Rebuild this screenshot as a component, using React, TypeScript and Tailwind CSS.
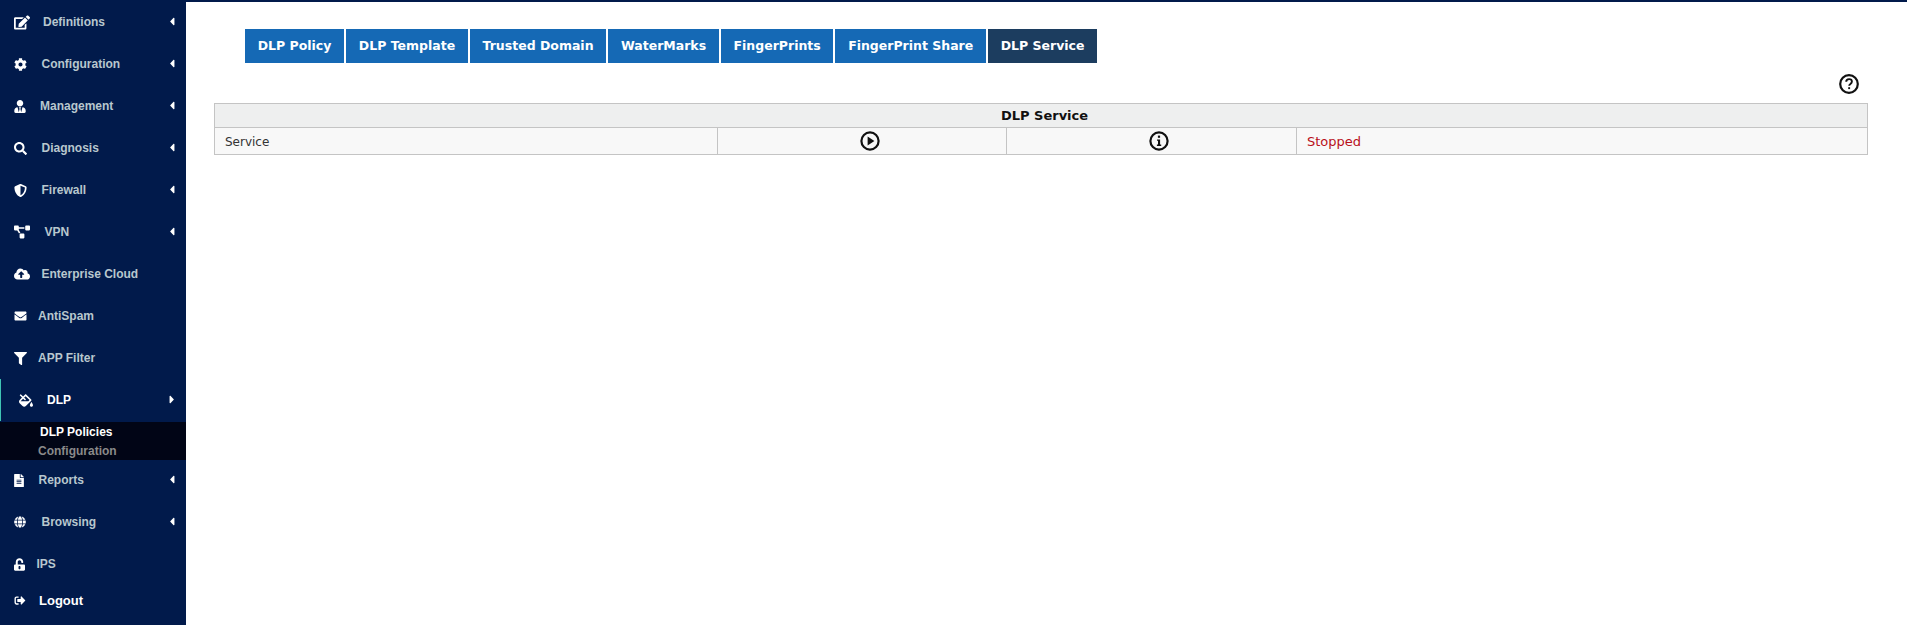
import {
  FaEdit, FaCog, FaUserTie, FaSearch, FaShieldAlt, FaProjectDiagram, FaCloudUploadAlt,
  FaEnvelope, FaFilter, FaFillDrip, FaFileAlt, FaGlobe, FaUnlockAlt, FaSignOutAlt,
  FaCaretLeft, FaCaretRight,
} from 'react-icons/fa'
import { ComponentType } from 'react'

type NavItem = {
  label: string
  icon: ComponentType<{ className?: string }>
  iconClass: string
  textClass: string
  arrow?: boolean
}

const topItems: NavItem[] = [
  { label: 'Definitions', icon: FaEdit, iconClass: 'w-[16px] h-[15px]', textClass: 'ml-[13px]', arrow: true },
  { label: 'Configuration', icon: FaCog, iconClass: 'w-[13px] h-[13px]', textClass: 'ml-[14.5px]', arrow: true },
  { label: 'Management', icon: FaUserTie, iconClass: 'w-[12px] h-[13px]', textClass: 'ml-[14px]', arrow: true },
  { label: 'Diagnosis', icon: FaSearch, iconClass: 'w-[13px] h-[13px]', textClass: 'ml-[14.5px]', arrow: true },
  { label: 'Firewall', icon: FaShieldAlt, iconClass: 'w-[13px] h-[13px]', textClass: 'ml-[14.5px]', arrow: true },
  { label: 'VPN', icon: FaProjectDiagram, iconClass: 'w-[16px] h-[14px]', textClass: 'ml-[14.5px]', arrow: true },
  { label: 'Enterprise Cloud', icon: FaCloudUploadAlt, iconClass: 'w-[16px] h-[14px]', textClass: 'ml-[11.5px]' },
  { label: 'AntiSpam', icon: FaEnvelope, iconClass: 'w-[13px] h-[12px]', textClass: 'ml-[11px]' },
  { label: 'APP Filter', icon: FaFilter, iconClass: 'w-[13px] h-[13px]', textClass: 'ml-[11px]' },
]

const bottomItems: NavItem[] = [
  { label: 'Reports', icon: FaFileAlt, iconClass: 'w-[10px] h-[13px]', textClass: 'ml-[14.5px]', arrow: true },
  { label: 'Browsing', icon: FaGlobe, iconClass: 'w-[12px] h-[12px]', textClass: 'ml-[15.5px]', arrow: true },
  { label: 'IPS', icon: FaUnlockAlt, iconClass: 'w-[11px] h-[13px]', textClass: 'ml-[11.5px]' },
]

const tabs = ['DLP Policy', 'DLP Template', 'Trusted Domain', 'WaterMarks', 'FingerPrints', 'FingerPrint Share', 'DLP Service']

function NavRow({ item }: { item: NavItem }) {
  const Icon = item.icon
  return (
    <div className="flex items-center h-[42px] pl-[14px] pr-[10px] text-[#b8c7ce]">
      <Icon className={`${item.iconClass} text-white shrink-0`} />
      <span className={`${item.textClass} flex-1 font-bold text-[12px] leading-none`}>{item.label}</span>
      {item.arrow && <FaCaretLeft className="w-[8px] h-[13px] text-white -mt-[1px]" />}
    </div>
  )
}

function Sidebar() {
  return (
    <aside className="w-[186px] h-[625px] shrink-0 bg-[#011a4b] font-['Liberation_Sans',sans-serif]">
      <div className="h-px" />
      {topItems.map((item) => (
        <NavRow key={item.label} item={item} />
      ))}
      <div className="flex items-center h-[42px] mb-px pl-[18px] pr-[10px] border-l border-[#3fc4b4] text-white">
        <FaFillDrip className="w-[14px] h-[13px] shrink-0" />
        <span className="ml-[14px] flex-1 font-bold text-[12px] leading-none">DLP</span>
        <FaCaretRight className="w-[8px] h-[13px] -mt-[1px]" />
      </div>
      <div className="h-[38px] bg-[#010516] pl-[38px] pt-[1px] font-bold text-[12px] leading-[19px]">
        <div className="pl-[2px] text-white">DLP Policies</div>
        <div className="text-[#8a8a8a]">Configuration</div>
      </div>
      <div className="-mt-px">
        {bottomItems.map((item) => (
          <NavRow key={item.label} item={item} />
        ))}
      </div>
      <div className="flex items-center h-[30px] pl-[14px] text-white">
        <FaSignOutAlt className="w-[12px] h-[11px] shrink-0" />
        <span className="ml-[13px] font-bold text-[13px] leading-none">Logout</span>
      </div>
    </aside>
  )
}

function PlayIcon() {
  return (
    <svg viewBox="0 0 20 20" className="w-[20px] h-[20px] mx-auto block">
      <circle cx="10" cy="10" r="8.6" fill="none" stroke="#111" strokeWidth="2.2" />
      <path d="M7.6 5.6 14.4 10 7.6 14.4Z" fill="#111" />
    </svg>
  )
}

function InfoIcon() {
  return (
    <svg viewBox="0 0 20 20" className="w-[20px] h-[20px] mx-auto block">
      <circle cx="10" cy="10" r="8.6" fill="none" stroke="#111" strokeWidth="2.2" />
      <rect x="8.9" y="4.6" width="2.2" height="2.2" fill="#111" />
      <path d="M8 8.4h3.1v5.2H12.2v1.4H7.9v-1.4h1.1V9.8H8Z" fill="#111" />
    </svg>
  )
}

function HelpIcon() {
  return (
    <svg viewBox="0 0 20 20" className="w-[20px] h-[20px]">
      <circle cx="10" cy="10" r="8.8" fill="none" stroke="#111" strokeWidth="2.2" />
      <path d="M7.2 7.8c0-1.7 1.2-2.7 2.9-2.7s2.8 1 2.8 2.4c0 1.2-.7 1.8-1.5 2.4-.7.5-1.2.9-1.2 1.8" fill="none" stroke="#111" strokeWidth="1.9" />
      <rect x="9.2" y="13.2" width="1.9" height="1.9" fill="#111" />
    </svg>
  )
}

export default function App() {
  return (
    <div className="flex w-[1907px] h-[625px] overflow-hidden bg-white font-['DejaVu_Sans',Verdana,sans-serif]">
      <Sidebar />
      <main className="flex-1 min-w-0 pl-[28px] pr-[39px] border-t-2 border-[#011a4b]">
        <nav className="flex gap-[2px] ml-[31px] mt-[27px]">
          {tabs.map((tab) => (
            <div
              key={tab}
              className={`h-[34px] px-[12.7px] flex items-center text-[12.5px] font-bold text-white ${
                tab === 'DLP Service' ? 'bg-[#1c3d5f]' : 'bg-[#1569b5]'
              }`}
            >
              {tab}
            </div>
          ))}
        </nav>
        <div className="flex justify-end mt-[11px] mb-[9px] pr-[9px] h-[20px]">
          <HelpIcon />
        </div>
        <table className="w-[1654px] table-fixed border-collapse border border-[#c4c4c4] text-[#333]">
          <colgroup>
            <col className="w-[503px]" />
            <col className="w-[289px]" />
            <col className="w-[290px]" />
            <col />
          </colgroup>
          <thead>
            <tr className="h-[24px] bg-[#eeefef]">
              <th colSpan={4} className="border border-[#c4c4c4] p-0 pl-[7px] text-[13px] font-bold text-[#111] text-center">
                DLP Service
              </th>
            </tr>
          </thead>
          <tbody>
            <tr className="h-[27px] bg-[#f8f8f8]">
              <td className="border border-[#c4c4c4] pl-[10px] pt-[1px] pb-0 text-[12px]">Service</td>
              <td className="border border-[#c4c4c4] p-0 pl-[16px]"><PlayIcon /></td>
              <td className="border border-[#c4c4c4] p-0 pl-[14px]"><InfoIcon /></td>
              <td className="border border-[#c4c4c4] pl-[10px] pt-[1px] pb-0 text-[13px] font-normal text-[#b8101a]">Stopped</td>
            </tr>
          </tbody>
        </table>
      </main>
    </div>
  )
}
